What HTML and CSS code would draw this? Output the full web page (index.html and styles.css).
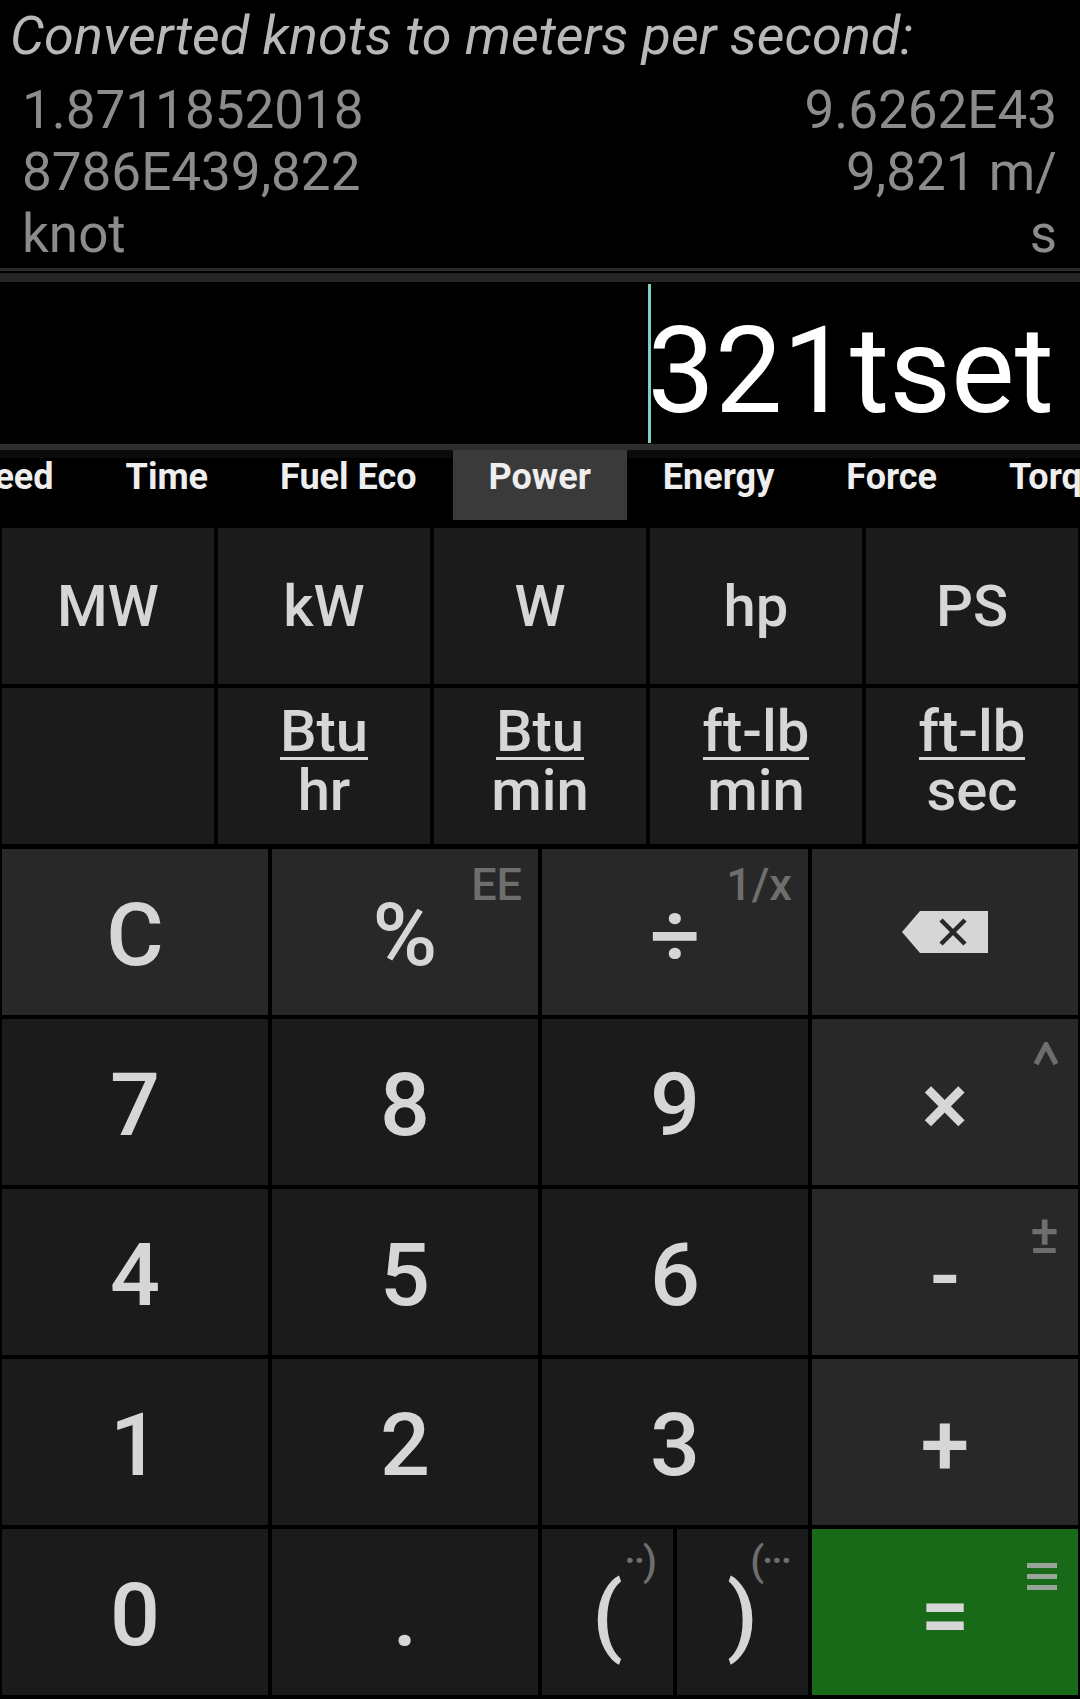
FILE: index.html
```html
<!DOCTYPE html>
<html lang="en">
<head>
<meta charset="utf-8">
<title>Unit converter calculator</title>
<link rel="stylesheet" href="styles.css">
</head>
<body>
<div class="app">
  <header class="result">
    <div class="result-title">Converted knots to meters per second:</div>
    <div class="result-values">
      <div class="result-from">1.8711852018<br>8786E439,822<br>knot</div>
      <div class="result-to">9.6262E43<br>9,821 m/<br>s</div>
    </div>
  </header>
  <div class="rule"></div>
  <div class="display">
    <span class="cursor"></span>
    <span class="expr">321tset</span>
  </div>
  <div class="display-rule"></div>
  <nav class="tabs">
    <div class="tab-strip">
      <div class="tab">Speed</div>
      <div class="tab">Time</div>
      <div class="tab">Fuel Eco</div>
      <div class="tab is-active">Power</div>
      <div class="tab">Energy</div>
      <div class="tab">Force</div>
      <div class="tab">Torque</div>
    </div>
  </nav>
  <section class="units">
    <div class="unit">MW</div>
    <div class="unit">kW</div>
    <div class="unit">W</div>
    <div class="unit">hp</div>
    <div class="unit">PS</div>
    <div class="unit"></div>
    <div class="unit"><span class="frac"><span class="frac-num">Btu</span><span class="frac-den">hr</span></span></div>
    <div class="unit"><span class="frac"><span class="frac-num">Btu</span><span class="frac-den">min</span></span></div>
    <div class="unit"><span class="frac"><span class="frac-num">ft-lb</span><span class="frac-den">min</span></span></div>
    <div class="unit"><span class="frac"><span class="frac-num">ft-lb</span><span class="frac-den">sec</span></span></div>
  </section>
  <section class="keypad">
    <div class="key key-func">C</div>
    <div class="key key-func">%<span class="key-alt">EE</span></div>
    <div class="key key-func">÷<span class="key-alt">1/x</span></div>
    <div class="key key-func">
      <svg class="icon-back" width="86" height="42" viewBox="0 0 86 42">
        <path d="M0 21 L18 0 H86 V42 H18 Z" fill="#d6d6d6"/>
        <path d="M39 9 L63 33 M63 9 L39 33" stroke="#282828" stroke-width="4.5"/>
      </svg>
    </div>

    <div class="key">7</div>
    <div class="key">8</div>
    <div class="key">9</div>
    <div class="key key-func">×<svg class="key-alt-icon alt-caret" width="24" height="24" viewBox="0 0 24 24"><path d="M2 22 L12 3 L22 22" fill="none" stroke="#6e6e6e" stroke-width="5.5"/></svg></div>

    <div class="key">4</div>
    <div class="key">5</div>
    <div class="key">6</div>
    <div class="key key-func">-<span class="key-alt alt-pm">±</span></div>

    <div class="key">1</div>
    <div class="key">2</div>
    <div class="key">3</div>
    <div class="key key-func">+</div>

    <div class="key">0</div>
    <div class="key">.</div>
    <div class="key-split">
      <div class="key">(<span class="key-alt alt-paren">··)</span></div>
      <div class="key">)<span class="key-alt alt-paren">(···</span></div>
    </div>
    <div class="key key-equals">=<svg class="key-alt-icon alt-menu" width="30" height="27" viewBox="0 0 30 27"><rect x="0" y="0" width="30" height="5" fill="#9aa59a"/><rect x="0" y="11" width="30" height="5" fill="#9aa59a"/><rect x="0" y="22" width="30" height="5" fill="#9aa59a"/></svg></div>
  </section>
</div>
</body>
</html>
```

FILE: styles.css
```css
* {
  box-sizing: border-box;
}

html,
body {
  margin: 0;
  padding: 0;
  background: #000;
}

body {
  width: 1080px;
  height: 1699px;
  overflow: hidden;
  font-family: Roboto, "Noto Sans", "Liberation Sans", sans-serif;
}

.app {
  width: 1080px;
}

/* ---------- conversion result ---------- */
.result {
  height: 268px;
  padding: 5px 23px 0 10px;
}

.result-title {
  font-style: italic;
  font-size: 54px;
  line-height: 62px;
  color: #b8b8b8;
  white-space: nowrap;
}

.result-values {
  display: flex;
  justify-content: space-between;
  margin-top: 12px;
  padding-left: 12px;
  font-size: 53px;
  line-height: 62px;
  color: #8c8c8c;
}

.result-to {
  text-align: right;
}

.rule {
  height: 14px;
  border-top: 3px solid #2b2b2b;
  border-bottom: 9px solid #262626;
}

/* ---------- expression display ---------- */
.display {
  height: 162px;
  display: flex;
  justify-content: flex-end;
  padding-right: 26px;
}

.cursor {
  width: 3px;
  margin: 2px -3px 1px 0;
  background: #7fcdc6;
}

.expr {
  font-size: 120px;
  line-height: 146px;
  padding-top: 16px;
  color: #fff;
}

.display-rule {
  height: 6px;
  background: #2e2e2e;
}

/* ---------- category tabs ---------- */
.tabs {
  height: 70px;
  overflow: hidden;
  background: linear-gradient(#0b0b0b 0, #0b0b0b 8px, #000 8px);
}

.tab-strip {
  display: flex;
  height: 100%;
  margin-left: -84px;
}

.tab {
  flex: none;
  padding: 9px 36px 0;
  font-weight: 700;
  font-size: 36px;
  line-height: 36px;
  color: #eeeeee;
  white-space: nowrap;
}

.tab.is-active {
  background: #3a3a3a;
}

/* ---------- unit buttons ---------- */
.units {
  display: grid;
  grid-template-columns: repeat(5, 1fr);
  grid-auto-rows: 156px;
  gap: 4px;
  padding: 0 2px;
  margin-top: 8px;
}

.unit {
  display: flex;
  align-items: center;
  justify-content: center;
  background: #1b1b1b;
  font-size: 58px;
  font-weight: 500;
  color: #d6d6d6;
}

.frac {
  display: flex;
  flex-direction: column;
  align-items: center;
  margin-bottom: 11px;
}

.frac-num {
  line-height: 52px;
  border-bottom: 3px solid #d6d6d6;
}

.frac-den {
  line-height: 52px;
  margin-top: 4px;
}

/* ---------- keypad ---------- */
.keypad {
  display: grid;
  grid-template-columns: repeat(4, 1fr);
  grid-auto-rows: 166px;
  gap: 4px;
  padding: 0 2px;
  margin-top: 5px;
}

.key {
  position: relative;
  display: flex;
  align-items: center;
  justify-content: center;
  padding-top: 6px;
  background: #1b1b1b;
  font-size: 88px;
  font-weight: 500;
  line-height: 1;
  color: #d6d6d6;
}

.key-func {
  background: #282828;
}

.key-equals {
  background: #196a18;
}

.key-split {
  display: grid;
  grid-template-columns: 1fr 1fr;
  gap: 4px;
}

.icon-back {
  display: block;
  margin-top: -6px;
}

.key-alt {
  position: absolute;
  top: 14px;
  right: 16px;
  font-size: 45px;
  line-height: 44px;
  font-weight: 500;
  color: #6e6e6e;
}

.key-alt-icon {
  position: absolute;
  display: block;
}

.alt-caret {
  top: 23px;
  right: 20px;
}

.alt-pm {
  top: 19px;
  right: 19px;
  font-size: 54px;
  line-height: 54px;
}

.alt-paren {
  top: 11px;
  right: 18px;
  font-size: 40px;
  letter-spacing: -2px;
}

.alt-menu {
  top: 34px;
  right: 21px;
}
```
